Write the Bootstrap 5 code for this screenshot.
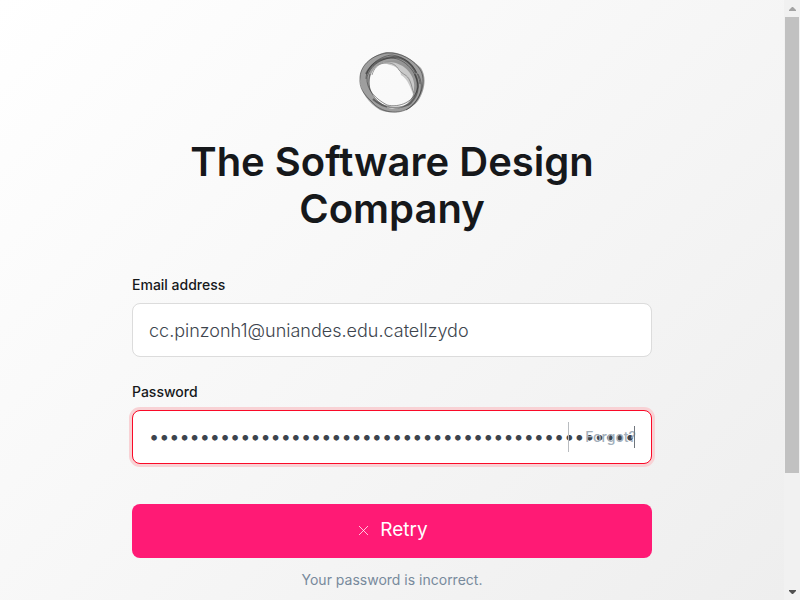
<!DOCTYPE html>
<html lang="en">
<head>
<meta charset="utf-8">
<meta name="viewport" content="width=device-width, initial-scale=1">
<title>Sign in</title>
<link href="https://cdn.jsdelivr.net/npm/bootstrap@5.3.0/dist/css/bootstrap.min.css" rel="stylesheet">
<style>
  body { font-family: Inter, "Liberation Sans", sans-serif; color: #16181b; background: #f1f1f1; }
  .shell { height: 100vh; }
  .page { background: linear-gradient(135deg, #fff 0%, #eee 100%); padding: 50px 16px 0; }
  .login-form { max-width: 520px; }
  .brand-logo { width: 68px; height: 66px; }
  .brand-title { font-size: 40px; line-height: 47px; font-weight: 600; margin: 22px 0 43px; }
  .field-label { font-size: 14px; line-height: 20px; font-weight: 500; margin-bottom: 8px; }
  .field-input { height: 54px; padding: 0 16px; font-size: 18px; font-weight: 300; color: #3d444d; border: 1px solid #dcdcdc; border-radius: 8px; }
  .field-input:focus { color: #3d444d; }
  .field-input.has-error, .field-input.has-error:focus { padding-bottom: 2px; font-weight: 400; border-color: #fa0a28; box-shadow: 0 0 0 3px #f8d2d5; }
  .field-group { margin-bottom: 25px; }
  .forgot { top: 12px; right: 16px; height: 30px; padding: 0 0 2px 16px; border-left: 1px solid #b9bcc0; font-size: 14px; font-weight: 500; color: #a3afbb; }
  .caret { top: 16px; right: 17px; width: 1px; height: 22px; background: #70767d; }
  .retry { height: 54px; padding: 0 12px 2px; margin-top: 40px; background: #ff1a75; border: 0; border-radius: 8px; color: #fff; font-size: 19px; }
  .retry:hover { background: #e61469; color: #fff; }
  .message { font-size: 14px; line-height: 20px; color: #788a9c; margin-top: 12px; }
  .scroll-track { width: 16px; padding-left: 1px; }
  .scroll-thumb { flex: 0 1 456px; width: 14px; background: #c1c1c1; }
  .scroll-end { height: 17px; }
</style>
<script src="https://cdn.jsdelivr.net/npm/bootstrap@5.3.0/dist/js/bootstrap.bundle.min.js"></script>
</head>
<body>
<div class="shell d-flex overflow-hidden">
  <main class="page flex-grow-1">
    <form class="login-form mx-auto">
      <div class="text-center">
        <svg class="brand-logo" viewBox="0 0 68 66" fill="none" aria-hidden="true">
          <path d="M2 27C3 15 14 5 28 2C42 1 54 9 63 18C69 27 67 41 60 51C51 62 34 65 22 60C11 53 2 43 2 27ZM12 28C9 43 19 55 34 59C47 59 56 50 56 38C58 24 44 11 29 12C20 13 14 19 12 28Z" fill="#666" fill-opacity=".62" fill-rule="evenodd"/>
          <path d="M14 23C20 10 40 7 50 14C60 23 61 38 56 47C53 39 50 29 43 25C42 16 34 16 29 14Q20 12 14 23Z" fill="#888" fill-opacity=".42"/>
          <g stroke="#333" stroke-width="1" stroke-opacity=".55">
            <path d="M2 27C3 14 15 5 29 3C42 2 57 10 63 21C69 34 61 51 51 58C41 65 23 63 14 52C6 44 1 39 2 27Z"/>
            <path d="M60 24C69 40 58 55 48 60M8 29C8 16 22 6 34 5C51 7 61 22 62 34"/>
            <path d="M9 27C12 16 22 9 33 8C47 8 60 23 60 37C57 52 41 58 29 55C18 49 8 40 9 27Z"/>
            <path d="M12 24C8 39 16 51 29 57"/>
          </g>
          <path d="M8 24C14 12 23 8 35 7C46 7 54 14 58 23M57 24C63 37 59 48 50 55M15 49C25 58 40 61 53 53" stroke="#222" stroke-width="2" stroke-opacity=".5"/>
          <path d="M14 25C16 18 20 14 26 13C34 12 38 15 41 20C45 25 49 24 52 31C54 35 54 40 56 43" stroke="#777" stroke-opacity=".7"/>
        </svg>
        <h1 class="brand-title">The Software Design Company</h1>
      </div>
      <div class="field-group">
        <label class="field-label d-block" for="email">Email address</label>
        <input class="form-control field-input" id="email" type="email" value="cc.pinzonh1@uniandes.edu.catellzydo">
      </div>
      <label class="field-label d-block" for="password">Password</label>
      <div class="position-relative">
        <input class="form-control field-input has-error" id="password" type="password" value="1234567890123456789012345678901234567890123456789">
        <a class="forgot position-absolute d-flex align-items-center text-decoration-none" href="#">Forgot?</a>
        <span class="caret position-absolute"></span>
      </div>
      <button class="btn retry w-100 d-flex align-items-center justify-content-center" type="button">
        <svg class="me-2" width="16" height="16" viewBox="0 0 16 16" fill="none" stroke="#fff" stroke-opacity=".75" aria-hidden="true"><path d="M3 4L12 13M12 4L3 13"/></svg>
        Retry
      </button>
      <p class="message text-center mb-0">Your password is incorrect.</p>
    </form>
  </main>
  <div class="scroll-track d-flex flex-column flex-shrink-0" aria-hidden="true">
    <div class="scroll-end d-flex align-items-center justify-content-center"><svg width="7" height="4"><path d="M0 4V3L3 0H4L7 3V4Z" fill="#a3a3a3"/></svg></div>
    <div class="scroll-thumb"></div>
    <div class="scroll-end mt-auto d-flex align-items-center justify-content-center"><svg width="7" height="4"><path d="M0 0V1L3 4H4L7 1V0Z" fill="#505050"/></svg></div>
  </div>
</div>
</body>
</html>
